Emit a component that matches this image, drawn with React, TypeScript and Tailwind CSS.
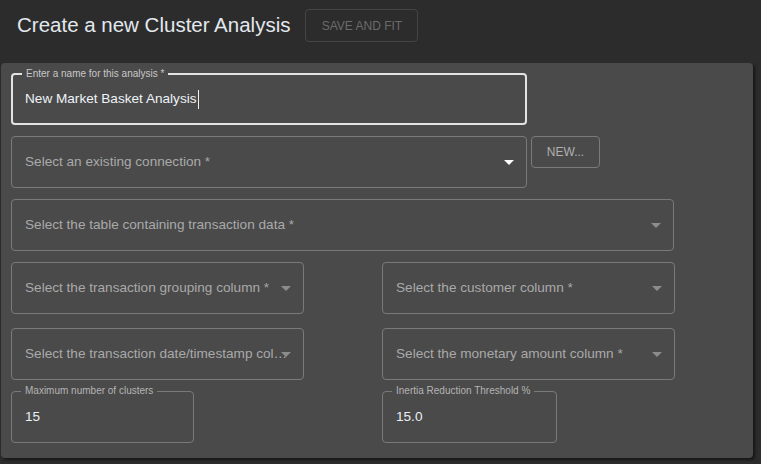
import React from "react";

const font = { fontFamily: '"Liberation Sans", Arial, sans-serif' };

function Arrow({ white }: { white?: boolean }) {
  return (
    <svg width="10" height="5" viewBox="0 0 10 5" className="shrink-0 ml-[-8px]">
      <path d="M0 0 L10 0 L5 5 Z" fill={white ? "#ffffff" : "#8c8c8c"} />
    </svg>
  );
}

function SelectField({
  text,
  className,
  white,
}: {
  text: string;
  className: string;
  white?: boolean;
}) {
  return (
    <div
      className={`h-[52px] rounded-[4px] border border-[#7a7a7a] flex items-center pl-[13px] pr-[12px] ${className}`}
    >
      <span className="flex-1 min-w-0 truncate text-[13.6px] text-[#a9a9a9]">{text}</span>
      <Arrow white={white} />
    </div>
  );
}

function NumberField({ label, value, className }: { label: string; value: string; className: string }) {
  return (
    <div className={`relative h-[52px] rounded-[4px] border border-[#7a7a7a] flex items-center pl-[13px] ${className}`}>
      <span className="absolute left-[9px] top-[-8px] px-[4px] bg-[#4a4a4a] text-[10px] leading-[14px] text-[#b4b4b4]">
        {label}
      </span>
      <span className="text-[13.6px] text-[#e8eef5]">{value}</span>
    </div>
  );
}

export default function App() {
  return (
    <div className="w-[761px] h-[464px] bg-[#2c2c2c] overflow-hidden" style={font}>
      <div className="flex items-center h-[33px] mt-[9px] pl-[17px]">
        <h1 className="text-[20.5px] text-[#e3e8ee] leading-none">Create a new Cluster Analysis</h1>
        <button className="ml-[15px] h-[33px] w-[113px] rounded-[4px] border border-[#454545] text-[12px] text-[#6b6b6b]">
          SAVE AND FIT
        </button>
      </div>
      <div className="mt-[21px] ml-[1px] w-[752px] rounded-[4px] bg-[#4a4a4a] pt-[10px] pb-[15px] pl-[10px] shadow-[2px_2px_3px_rgba(0,0,0,0.5)]">
        <div className="relative h-[52px] w-[516px] rounded-[4px] border-2 border-[#e3e3e3] flex items-center pl-[12px]">
          <span className="absolute left-[9px] top-[-8px] px-[4px] bg-[#4a4a4a] text-[10px] leading-[14px] text-[#c8c8c8]">
            Enter a name for this analysis *
          </span>
          <span className="text-[13.6px] text-[#eef3f8]">New Market Basket Analysis</span>
          <span className="ml-[1px] w-[1px] h-[19px] bg-[#f0f0f0]" />
        </div>
        <div className="flex mt-[11px] items-start gap-[4px]">
          <SelectField text="Select an existing connection *" className="w-[516px]" white />
          <button className="h-[32px] w-[69px] rounded-[4px] border border-[#7a7a7a] text-[12px] text-[#b0b0b0]">
            NEW...
          </button>
        </div>
        <SelectField text="Select the table containing transaction data *" className="w-[663px] mt-[11px]" />
        <div className="flex gap-[78px] mt-[11px]">
          <SelectField text="Select the transaction grouping column *" className="w-[293px]" />
          <SelectField text="Select the customer column *" className="w-[293px]" />
        </div>
        <div className="flex gap-[78px] mt-[14px]">
          <SelectField text="Select the transaction date/timestamp column *" className="w-[293px]" />
          <SelectField text="Select the monetary amount column *" className="w-[293px]" />
        </div>
        <div className="flex gap-[188px] mt-[11px]">
          <NumberField label="Maximum number of clusters" value="15" className="w-[183px]" />
          <NumberField label="Inertia Reduction Threshold %" value="15.0" className="w-[175px]" />
        </div>
      </div>
    </div>
  );
}
